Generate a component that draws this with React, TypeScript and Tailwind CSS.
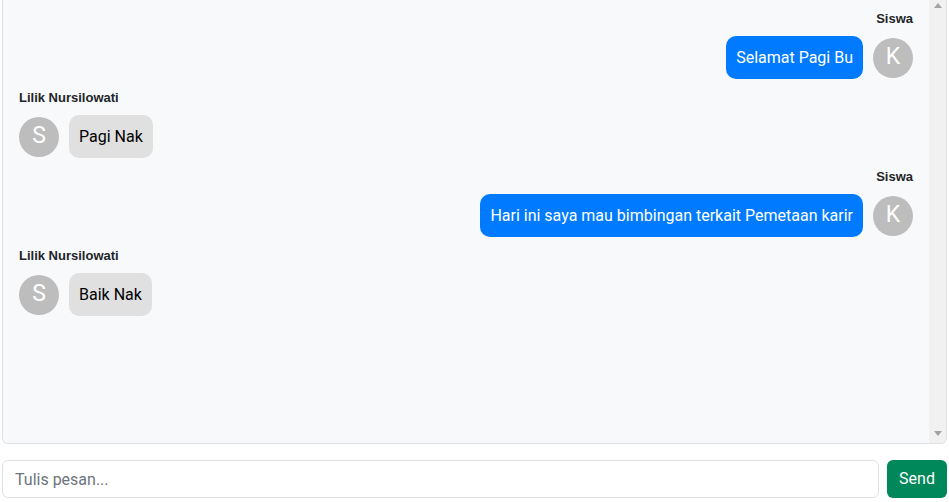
import { useState } from 'react';

type Message = {
  id: number;
  sender: 'siswa' | 'guru';
  name: string;
  text: string;
};

const messages: Message[] = [
  { id: 1, sender: 'siswa', name: 'Siswa', text: 'Selamat Pagi Bu' },
  { id: 2, sender: 'guru', name: 'Lilik Nursilowati', text: 'Pagi Nak' },
  { id: 3, sender: 'siswa', name: 'Siswa', text: 'Hari ini saya mau bimbingan terkait Pemetaan karir' },
  { id: 4, sender: 'guru', name: 'Lilik Nursilowati', text: 'Baik Nak' },
];

function Avatar({ letter }: { letter: string }) {
  return (
    <div className="flex items-center justify-center w-10 h-10 shrink-0 rounded-full bg-[#bdbdbd] text-white text-[23px]">
      {letter}
    </div>
  );
}

function ChatItem({ item }: { item: Message }) {
  const mine = item.sender === 'siswa';

  return (
    <div className={`flex flex-col mb-[10px] ${mine ? 'items-end' : 'items-start'}`}>
      <span className="font-['Liberation_Sans',Arial,sans-serif] font-bold text-[13px] leading-[18px] text-[#212529] mb-2">
        {item.name}
      </span>

      <div className={`flex items-center gap-[10px] ${mine ? 'flex-row-reverse' : ''}`}>
        <Avatar letter={mine ? 'K' : 'S'} />
        <div
          className={
            mine
              ? 'rounded-[10px] bg-[#007bff] text-white px-[10px] py-[9.5px] leading-6'
              : 'rounded-[10px] bg-[#e0e0e0] text-black px-[10px] py-[9.5px] leading-6'
          }
        >
          {item.text}
        </div>
      </div>
    </div>
  );
}

// static scrollbar strip, like the classic one on the chat box
function ScrollStrip() {
  return (
    <div className="flex flex-col justify-between items-center w-[17px] shrink-0 bg-[#f1f1f1] pt-[3px] pb-[7px]">
      <svg width="8" height="5" viewBox="0 0 8 5">
        <path d="M4 0 L8 5 L0 5 Z" fill="#a3a3a3" />
      </svg>
      <svg width="8" height="5" viewBox="0 0 8 5">
        <path d="M0 0 L8 0 L4 5 Z" fill="#a3a3a3" />
      </svg>
    </div>
  );
}

export default function App() {
  const [text, setText] = useState('');

  return (
    <div className="px-[2px] bg-white font-['Roboto',sans-serif] text-[16px]">
      <div className="flex h-[444px] bg-[#f8f9fa] border-x border-b border-[#dee2e6] rounded-b-md overflow-hidden">
        <div className="flex-1 px-4 pt-[10px]">
          {messages.map((item) => (
            <ChatItem key={item.id} item={item} />
          ))}
        </div>
        <ScrollStrip />
      </div>

      <div className="flex gap-2 mt-4">
        <input
          type="text"
          value={text}
          onChange={(e) => setText(e.target.value)}
          placeholder="Tulis pesan..."
          className="flex-1 h-[38px] px-3 border border-[#dee2e6] rounded-md bg-white text-[#212529] placeholder:text-[#6c757d] outline-none"
        />
        <button type="button" className="h-[38px] w-[60px] rounded-md bg-[#00885a] text-white">
          Send
        </button>
      </div>
    </div>
  );
}
